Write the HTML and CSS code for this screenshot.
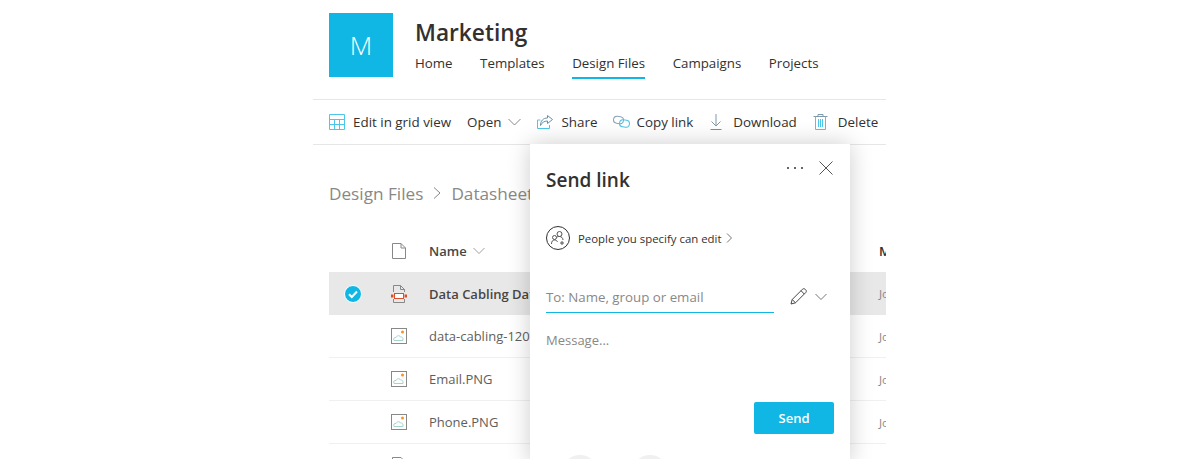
FILE: index.html
```html
<!DOCTYPE html>
<html lang="en">
<head>
    <meta charset="UTF-8">
    <meta name="viewport" content="width=device-width, initial-scale=1.0">
    <title>Marketing - Design Files</title>
    <link rel="stylesheet" href="styles.css">
</head>
<body>
    <div class="page">
        <div class="site-header">
            <div class="site-logo">M</div>
            <div class="site-info">
                <h1 class="site-title">Marketing</h1>
                <div class="site-nav">
                    <a>Home</a>
                    <a>Templates</a>
                    <a class="active">Design Files</a>
                    <a>Campaigns</a>
                    <a>Projects</a>
                </div>
            </div>
        </div>

        <div class="command-bar">
            <div class="cmd">
                <svg class="cmd-icon" width="16" height="16" viewBox="0 0 16 16"><path d="M.5.500h15v15H.5zM.5 5.500h15M.5 10.500h15M5.500 5.500v10M10.500 5.500v10" fill="none" stroke="#4cc6ea"/></svg>
                Edit in grid view
            </div>
            <div class="cmd">
                Open
                <svg class="cmd-caret" width="13" height="12" viewBox="0 0 13 12"><path d="M.5 3 6.500 9l6-6" fill="none" stroke="#8a8886"/></svg>
            </div>
            <div class="cmd">
                <svg class="cmd-icon" width="16" height="16" viewBox="0 0 16 16"><path d="M3.500 6H.5v8.500h12V11" fill="none" stroke="#4cc6ea"/><path d="M10.500 1.500l5 4-5 4V7C7 7 5 8.500 3.500 11.500 3.500 7 6 4 10.500 4z" fill="none" stroke="#6b8fa8"/></svg>
                Share
            </div>
            <div class="cmd">
                <svg class="cmd-icon cmd-icon-tight" width="17" height="16" viewBox="0 0 17 16"><rect x=".5" y="2.500" width="10" height="7" rx="3.500" transform="rotate(8 5.500 6)" fill="none" stroke="#8aa4b5"/><rect x="6.500" y="6" width="10" height="7" rx="3.500" transform="rotate(8 11.500 9.500)" fill="none" stroke="#4cc6ea"/></svg>
                Copy link
            </div>
            <div class="cmd">
                <svg class="cmd-icon cmd-icon-wide" width="14" height="16" viewBox="0 0 14 16"><path d="M7 0v12M2.500 7.500 7 12l4.500-4.500" fill="none" stroke="#7c99ac"/><path d="M1.500 15.500h11" stroke="#12b5e5"/></svg>
                Download
            </div>
            <div class="cmd">
                <svg class="cmd-icon cmd-icon-wide" width="15" height="16" viewBox="0 0 15 16"><path d="M.5 2.500h14M5 2.500V.5h5v2" fill="none" stroke="#7c99ac"/><path d="M2.500 2.500v13h10v-13M5.500 5v8M7.500 5v8M9.500 5v8" fill="none" stroke="#4cc6ea"/></svg>
                Delete
            </div>
        </div>

        <div class="breadcrumb">
            <span>Design Files</span>
            <svg width="10" height="14" viewBox="0 0 10 14"><path d="M2 1.500 8 7l-6 5.500" fill="none" stroke="#8a8886"/></svg>
            <span>Datasheets</span>
        </div>

        <div class="file-list">
            <div class="file-row list-head">
                <div class="col-check"></div>
                <div class="col-icon">
                    <svg width="14" height="16" viewBox="0 0 14 16"><path d="M.5.500h8.500l4.500 4.500v10.500H.5zM9 .5V5h4.500" fill="none" stroke="#8a8886"/></svg>
                </div>
                <div class="col-name">Name
                    <svg class="sort-caret" width="12" height="12" viewBox="0 0 12 12"><path d="M.5 3 6 8.500 11.500 3" fill="none" stroke="#a19f9d"/></svg>
                </div>
                <div class="col-mod">Modified</div>
            </div>
            <div class="file-row selected">
                <div class="col-check">
                    <svg width="18" height="18" viewBox="0 0 18 18"><circle cx="9" cy="9" r="8.500" fill="#10b7e4" stroke="#fff"/><path d="M5 9.200 7.800 12 13 6.500" fill="none" stroke="#fff" stroke-width="2"/></svg>
                </div>
                <div class="col-icon">
                    <svg width="16" height="18" viewBox="0 0 16 18"><path d="M2.500 7V.5h7l4 4V7M2.500 14v3.500h11V14M9.500.5v4h4" fill="none" stroke="#8a8886"/><rect x="3.500" y="8.500" width="9" height="5" fill="#fff" stroke="#d9512c"/><path d="M0 9.500h2.500v3H0zM13.500 9.500H16v3h-2.500z" fill="#d9512c"/></svg>
                </div>
                <div class="col-name">Data Cabling Datasheet.pdf</div>
                <div class="col-mod">Jo</div>
            </div>
            <div class="file-row">
                <div class="col-check"></div>
                <div class="col-icon">
                    <svg width="16" height="16" viewBox="0 0 16 16"><use href="#img-file"/></svg>
                </div>
                <div class="col-name">data-cabling-1200.png</div>
                <div class="col-mod">Jo</div>
            </div>
            <div class="file-row">
                <div class="col-check"></div>
                <div class="col-icon">
                    <svg width="16" height="16" viewBox="0 0 16 16"><use href="#img-file"/></svg>
                </div>
                <div class="col-name">Email.PNG</div>
                <div class="col-mod">Jo</div>
            </div>
            <div class="file-row">
                <div class="col-check"></div>
                <div class="col-icon">
                    <svg width="16" height="16" viewBox="0 0 16 16"><use href="#img-file"/></svg>
                </div>
                <div class="col-name">Phone.PNG</div>
                <div class="col-mod">Jo</div>
            </div>
            <div class="file-row">
                <div class="col-check"></div>
                <div class="col-icon">
                    <svg width="14" height="16" viewBox="0 0 14 16"><path d="M.5.500h8.500l4.500 4.500v10.500H.5z" fill="none" stroke="#8a8886"/></svg>
                </div>
            </div>
        </div>

        <div class="send-panel">
            <div class="panel-actions">
                <svg width="16" height="4" viewBox="0 0 16 4"><path d="M0 1h2v2H0zM7 1h2v2H7zM14 1h2v2h-2z" fill="#666"/></svg>
                <svg width="14" height="14" viewBox="0 0 14 14"><path d="M.5.500l13 13M13.500.5l-13 13" fill="none" stroke="#555"/></svg>
            </div>
            <h2 class="panel-title">Send link</h2>
            <div class="permission">
                <svg width="24" height="24" viewBox="0 0 24 24">
                    <circle cx="12" cy="12" r="11.500" fill="none" stroke="#323130"/>
                    <circle cx="13.500" cy="8" r="2.500" fill="none" stroke="#555"/>
                    <circle cx="8.500" cy="11.500" r="2" fill="none" stroke="#555"/>
                    <path d="M5.500 18c0-2.500 1-4 3-4s2.500 1 3 2M10.500 11.500c1-1 2-1 3-1 2 0 3.500 1.500 3.500 3.500M16 15v4M14 17h4" fill="none" stroke="#555"/>
                </svg>
                <span>People you specify can edit</span>
                <svg width="6" height="10" viewBox="0 0 6 10"><path d="M1 .5 5.500 5 1 9.500" fill="none" stroke="#777"/></svg>
            </div>
            <div class="to-row">
                <div class="to-input">To: Name, group or email</div>
                <svg class="to-pencil" width="17" height="17" viewBox="0 0 17 17"><path d="M1 16l1.200-4.500L12.500 1.200c.8-.7 1.800-.7 2.500 0l.8.800c.7.700.7 1.700 0 2.500L5.500 14.800zM2.200 11.500l3.300 3.300M11 2.700l3.300 3.300" fill="none" stroke="#484644"/></svg>
                <svg class="to-caret" width="12" height="12" viewBox="0 0 12 12"><path d="M.5 3 6 8.500 11.500 3" fill="none" stroke="#777"/></svg>
            </div>
            <div class="message">Message...</div>
            <div class="panel-footer">
                <div class="send-btn">Send</div>
            </div>
            <div class="share-options">
                <div class="share-circle"></div>
                <div class="share-circle"></div>
            </div>
        </div>
    </div>

    <!-- shared image file icon -->
    <svg class="icon-defs" width="0" height="0">
        <symbol id="img-file" viewBox="0 0 16 16">
            <rect x=".5" y=".5" width="15" height="15" fill="#fff" stroke="#8a8886"/>
            <circle cx="11.500" cy="4" r="1.500" fill="#f7941d"/>
            <path d="M3 12.500c-1-2 .5-3.500 2-3 .7-2 3.500-2.500 4.500-.5 1.500-.5 3 1 2.500 3.500z" fill="none" stroke="#a6d3cc"/>
        </symbol>
    </svg>
</body>
</html>
```

FILE: styles.css
```css
* {
    box-sizing: border-box;
}
body {
    margin: 0;
    background: #fff;
    font-family: "Open Sans", "Noto Sans", sans-serif;
    color: #323130;
    overflow: hidden;
}
.icon-defs {
    position: absolute;
}
.page {
    position: relative;
    width: 573px;
    height: 459px;
    margin-left: 313px;
    overflow: hidden;
}

/* site header */
.site-header {
    display: flex;
    height: 99px;
    padding: 13px 16px 0;
}
.site-logo {
    width: 64px;
    height: 64px;
    background: #10b7e4;
    color: #fff;
    font-size: 26px;
    font-weight: 300;
    line-height: 64px;
    text-align: center;
    margin-right: 22px;
}
.site-title {
    margin: 4px 0 0;
    font-size: 22.700px;
    font-weight: 600;
    line-height: 32px;
}
.site-nav {
    display: flex;
    gap: 27.500px;
    margin-top: 4px;
    font-size: 13.300px;
}
.site-nav a {
    padding-bottom: 4px;
    line-height: 20px;
}
.site-nav a.active {
    border-bottom: 2px solid #10b7e4;
}

/* command bar */
.command-bar {
    display: flex;
    align-items: center;
    height: 46px;
    padding-left: 16px;
    border-top: 1px solid #e6e6e6;
    border-bottom: 1px solid #e6e6e6;
    font-size: 13.400px;
    gap: 16px;
}
.cmd {
    display: flex;
    align-items: center;
    white-space: nowrap;
}
.cmd-icon {
    margin-right: 8px;
}
.cmd-icon-tight {
    margin-right: 6px;
}
.cmd-icon-wide {
    margin-right: 10px;
}
.cmd-caret {
    margin-left: 7px;
}

/* breadcrumb */
.breadcrumb {
    display: flex;
    align-items: center;
    gap: 9px;
    height: 26px;
    margin-top: 35px;
    padding-left: 16px;
    font-size: 17.200px;
    color: #8a8886;
    white-space: nowrap;
}

/* file list */
.file-list {
    margin: 23px 0 0 16px;
}
.file-row {
    display: flex;
    align-items: center;
    height: 43px;
    border-bottom: 1px solid #f0f0f0;
    font-size: 13px;
    color: #605e5c;
    white-space: nowrap;
}
.list-head {
    border-bottom: none;
    font-weight: 600;
    color: #484644;
}
.file-row.selected {
    background: #e8e8e8;
    font-weight: 600;
    color: #484644;
    border-bottom: none;
}
.col-check {
    display: flex;
    flex: none;
    justify-content: center;
    width: 48px;
}
.col-icon {
    display: flex;
    flex: none;
    justify-content: center;
    width: 44px;
    margin-right: 8px;
}
.col-name {
    display: flex;
    flex: none;
    align-items: center;
    width: 450px;
    gap: 6px;
}
.col-mod {
    font-size: 11.500px;
    font-weight: 400;
    color: #8a8886;
}
.list-head .col-mod {
    font-size: 13px;
    font-weight: 600;
    color: #323130;
}
.file-row .col-icon svg {
    display: block;
}

/* send link panel */
.send-panel {
    position: absolute;
    left: 217px;
    top: 144px;
    width: 320px;
    height: 320px;
    padding: 0 16px;
    background: #fff;
    box-shadow: 0 0 22px rgba(0, 0, 0, 0.2);
}
.panel-actions {
    display: flex;
    align-items: center;
    justify-content: flex-end;
    gap: 16px;
    height: 14px;
    margin: 17px 0 -8px;
    padding-right: 1px;
}
.panel-title {
    margin: 0;
    font-size: 19px;
    font-weight: 600;
    line-height: 26px;
}
.permission {
    display: flex;
    align-items: center;
    height: 24px;
    margin-top: 33px;
    font-size: 11.400px;
}
.permission span {
    margin: 0 5px 0 8px;
}
.to-row {
    display: flex;
    align-items: center;
    margin-top: 30px;
}
.to-input {
    width: 228px;
    height: 33px;
    border-bottom: 1px solid #10b7e4;
    color: #8a8886;
    font-size: 13.300px;
    line-height: 34px;
}
.to-pencil {
    margin-left: 16px;
}
.to-caret {
    margin-left: 8px;
}
.message {
    margin-top: 18px;
    color: #8a8886;
    font-size: 13px;
    line-height: 18px;
}
.panel-footer {
    display: flex;
    justify-content: flex-end;
    margin-top: 53px;
}
.send-btn {
    width: 80px;
    height: 32px;
    background: #10b7e4;
    border-radius: 2px;
    color: #fff;
    font-size: 13px;
    font-weight: 600;
    line-height: 32px;
    text-align: center;
}
.share-options {
    display: flex;
    gap: 34px;
    margin: 21px 0 0 16px;
}
.share-circle {
    width: 36px;
    height: 36px;
    border-radius: 50%;
    background: #f0f0f0;
}
```
